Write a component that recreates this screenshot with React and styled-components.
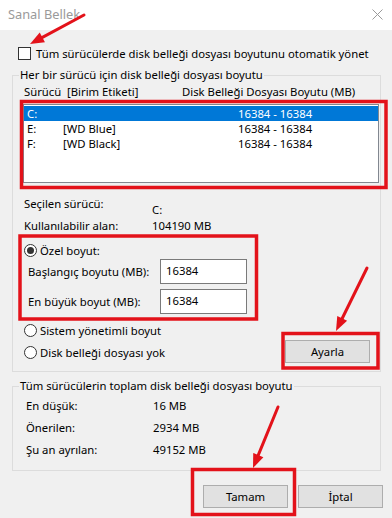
import React from 'react';
import styled, { createGlobalStyle } from 'styled-components';

const GlobalStyle = createGlobalStyle`
  html, body {
    margin: 0;
    padding: 0;
    background: #f0f0f0;
  }
  body {
    font-family: 'Noto Sans', 'Open Sans', sans-serif;
    font-size: 11.3px;
    color: #000;
  }
  * {
    box-sizing: border-box;
  }
`;

const Window = styled.div`
  position: relative;
  width: 392px;
  height: 518px;
  background: #f0f0f0;
  overflow: hidden;
`;

const TitleBar = styled.div`
  height: 30px;
  background: #fff;
  display: flex;
  align-items: center;
  justify-content: space-between;
  padding: 0 9px 2px 8px;
`;

const Title = styled.span`
  font-size: 12.8px;
  color: #9a9a9a;
`;

const Body = styled.div`
  padding: 0 9px 0 12px;
`;

const CheckRow = styled.label`
  display: flex;
  align-items: center;
  gap: 5px;
  height: 14px;
  margin-top: 16px;
  padding-left: 6px;
`;

const CheckBox = styled.span`
  width: 13px;
  height: 13px;
  border: 1px solid #333;
  background: #fff;
`;

const Group = styled.fieldset`
  margin: ${(p) => p.$top}px 2px 0 0;
  border: 1px solid #dcdcdc;
  padding: 0 1px ${(p) => p.$bottom}px 10px;
  min-width: 0;
`;

const Legend = styled.legend`
  padding: 0 1px;
  margin-left: -4px;
  line-height: 16px;
`;

const ListHeader = styled.div`
  display: grid;
  grid-template-columns: 43px 115px auto;
  height: 16px;
  line-height: 16px;
  margin-top: 1px;
  padding-left: 1px;
`;

const ListBox = styled.div`
  margin-top: 4px;
  height: 79px;
  border: 1px solid #828790;
  background: #fff;
  padding: 1px 0;
`;

const ListRow = styled.div`
  display: grid;
  grid-template-columns: 36px 175px auto;
  height: 15px;
  line-height: 15px;
  padding-left: 3px;
  background: ${(p) => (p.$selected ? '#0078d7' : 'transparent')};
  color: ${(p) => (p.$selected ? '#fff' : '#000')};
`;

const InfoGrid = styled.div`
  display: grid;
  grid-template-columns: ${(p) => p.$label}px auto;
  grid-auto-rows: 16px;
  row-gap: 6px;
  line-height: 16px;
  margin-top: ${(p) => p.$top}px;
  padding-left: ${(p) => p.$indent}px;
`;

const InfoValue = styled.span`
  margin-top: ${(p) => p.$shift || 0}px;
`;

const SizeArea = styled.div`
  display: flex;
  justify-content: space-between;
  align-items: flex-end;
  margin-top: 8px;
`;

const RadioColumn = styled.div`
  display: flex;
  flex-direction: column;
  padding-bottom: 3px;
`;

const RadioRow = styled.label`
  display: flex;
  align-items: center;
  gap: 3px;
  height: 16px;
  padding-left: 1px;
  margin-top: ${(p) => p.$top || 0}px;
`;

const Radio = styled.span`
  position: relative;
  width: 13px;
  height: 13px;
  border-radius: 50%;
  border: 1px solid #333;
  background: #fff;

  &::after {
    content: '';
    display: ${(p) => (p.$checked ? 'block' : 'none')};
    position: absolute;
    left: 2px;
    top: 2px;
    width: 7px;
    height: 7px;
    border-radius: 50%;
    background: #333;
  }
`;

const InputRow = styled.label`
  display: flex;
  align-items: center;
  height: 25px;
  padding-left: 5px;
  margin-top: ${(p) => p.$top || 0}px;

  span {
    width: 132px;
  }
`;

const TextBox = styled.div`
  width: 87px;
  height: 25px;
  border: 1px solid #7a7a7a;
  background: #fff;
  padding: 2px 0 0 5px;
  line-height: 18px;
`;

const Button = styled.button`
  width: 85px;
  height: 23px;
  border: 1px solid #adadad;
  background: #e1e1e1;
  font-family: inherit;
  font-size: inherit;
  color: #000;
  padding: 0;
  margin-right: ${(p) => p.$right || 0}px;
`;

const ButtonRow = styled.div`
  display: flex;
  justify-content: flex-end;
  gap: 10px;
  margin-top: 14px;
`;

const Annotations = styled.svg`
  position: absolute;
  left: 0;
  top: 0;
  pointer-events: none;
`;

const RED = '#e3121a';

const Arrow = ({ x1, y1, x2, y2 }) => {
  const len = Math.hypot(x2 - x1, y2 - y1);
  const ux = (x2 - x1) / len;
  const uy = (y2 - y1) / len;
  const head = 14;
  const half = 5.5;
  const bx = x2 - ux * head;
  const by = y2 - uy * head;
  const pts = [
    [x2, y2],
    [bx - uy * half, by + ux * half],
    [bx + uy * half, by - ux * half],
  ]
    .map((p) => p.join(','))
    .join(' ');
  return (
    <g>
      <line x1={x1} y1={y1} x2={bx + ux * 2} y2={by + uy * 2} stroke={RED} strokeWidth="3" strokeLinecap="round" />
      <polygon points={pts} fill={RED} />
    </g>
  );
};

const boxes = [
  [21.5, 101.5, 386, 187.5],
  [20, 236, 256.5, 319],
  [283, 333.5, 378, 368],
  [192.5, 469.5, 294.5, 514.5],
];

const drives = [
  { letter: 'C:', label: '', size: '16384 - 16384', selected: true },
  { letter: 'E:', label: '[WD Blue]', size: '16384 - 16384' },
  { letter: 'F:', label: '[WD Black]', size: '16384 - 16384' },
];

const App = () => {
  return (
    <Window>
      <GlobalStyle />
      <TitleBar>
        <Title>Sanal Bellek</Title>
        <svg width="11" height="11" viewBox="0 0 11 11">
          <path d="M0.5 0.5 L10.5 10.5 M10.5 0.5 L0.5 10.5" stroke="#9a9a9a" strokeWidth="1" fill="none" />
        </svg>
      </TitleBar>
      <Body>
        <CheckRow>
          <CheckBox />
          <span>Tüm sürücülerde disk belleği dosyası boyutunu otomatik yönet</span>
        </CheckRow>

        <Group $top={7} $bottom={8}>
          <Legend>Her bir sürücü için disk belleği dosyası boyutu</Legend>
          <ListHeader>
            <span>Sürücü</span>
            <span>[Birim Etiketi]</span>
            <span>Disk Belleği Dosyası Boyutu (MB)</span>
          </ListHeader>
          <ListBox>
            {drives.map((d) => (
              <ListRow key={d.letter} $selected={d.selected}>
                <span>{d.letter}</span>
                <span>{d.label}</span>
                <span>{d.size}</span>
              </ListRow>
            ))}
          </ListBox>

          <InfoGrid $label={128} $top={13} $indent={1}>
            <span>Seçilen sürücü:</span>
            <InfoValue $shift={6}>C:</InfoValue>
            <span>Kullanılabilir alan:</span>
            <InfoValue>104190 MB</InfoValue>
          </InfoGrid>

          <SizeArea>
            <RadioColumn>
              <RadioRow>
                <Radio $checked />
                <span>Özel boyut:</span>
              </RadioRow>
              <InputRow $top={1}>
                <span>Başlangıç boyutu (MB):</span>
                <TextBox>16384</TextBox>
              </InputRow>
              <InputRow $top={5}>
                <span>En büyük boyut (MB):</span>
                <TextBox>16384</TextBox>
              </InputRow>
              <RadioRow $top={8}>
                <Radio />
                <span>Sistem yönetimli boyut</span>
              </RadioRow>
              <RadioRow $top={6}>
                <Radio />
                <span>Disk belleği dosyası yok</span>
              </RadioRow>
            </RadioColumn>
            <Button $right={9}>Ayarla</Button>
          </SizeArea>
        </Group>

        <Group $top={6} $bottom={12}>
          <Legend>Tüm sürücülerin toplam disk belleği dosyası boyutu</Legend>
          <InfoGrid $label={127} $top={4} $indent={3}>
            <span>En düşük:</span>
            <InfoValue>16 MB</InfoValue>
            <span>Önerilen:</span>
            <InfoValue>2934 MB</InfoValue>
            <span>Şu an ayrılan:</span>
            <InfoValue>49152 MB</InfoValue>
          </InfoGrid>
        </Group>

        <ButtonRow>
          <Button>Tamam</Button>
          <Button>İptal</Button>
        </ButtonRow>
      </Body>

      <Annotations width="392" height="518" viewBox="0 0 392 518">
        {boxes.map(([x1, y1, x2, y2], i) => (
          <rect key={i} x={x1} y={y1} width={x2 - x1} height={y2 - y1} fill="none" stroke={RED} strokeWidth="3.5" />
        ))}
        <Arrow x1={84} y1={15} x2={30} y2={44} />
        <Arrow x1={367} y1={268} x2={336} y2={331} />
        <Arrow x1={278} y1={407} x2={253} y2={468} />
      </Annotations>
    </Window>
  );
};

export default App;
